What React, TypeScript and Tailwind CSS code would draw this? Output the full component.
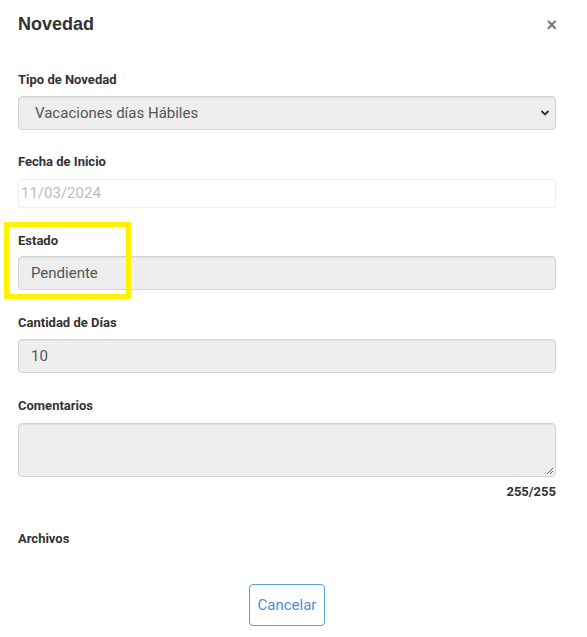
import React from 'react'

const label = 'block text-[13px] font-bold text-[#333] leading-5'
const filled = 'w-full h-[34px] rounded border border-[#d4d4d4] bg-[#eeeeee] px-3 text-[15px] text-[#555] flex items-center shadow-[inset_0_1px_1px_rgba(0,0,0,0.06)]'

export default function App() {
  return (
    <div className="relative w-[587px] h-[637px] bg-white overflow-hidden" style={{ fontFamily: 'Roboto, "Liberation Sans", sans-serif' }}>
      <div className="pl-[18px] pr-[31px]">
        <div className="flex items-start justify-between pt-[12px]">
          <h2 className="text-[18px] font-bold text-[#333] leading-6" style={{ fontFamily: '"Liberation Sans", Arial, sans-serif' }}>Novedad</h2>
          <span className="mt-[3px] mr-[-1px] text-[18px] font-bold leading-5 text-[#777]" style={{ fontFamily: '"Liberation Sans", Arial, sans-serif' }}>×</span>
        </div>

        <label className={`${label} mt-[34px]`}>Tipo de Novedad</label>
        <div className={`${filled} mt-[6px] relative pl-4`}>
          Vacaciones días Hábiles
          <svg className="absolute right-[5px] top-1/2 -translate-y-1/2" width="10" height="7" viewBox="0 0 10 7">
            <path d="M1.5 1.5 L5 5 L8.5 1.5" fill="none" stroke="#333" strokeWidth="1.8" />
          </svg>
        </div>

        <label className={`${label} mt-[22px]`}>Fecha de Inicio</label>
        <div className="mt-[7px] h-[29px] w-full rounded-[3px] border border-[#eeeeee] bg-white px-[2px] flex items-center text-[15px] text-[#bbbbbb]">
          11/03/2024
        </div>

        <label className={`${label} mt-[23px]`}>Estado</label>
        <div className={`${filled} mt-[5px]`}>Pendiente</div>

        <label className={`${label} mt-[23px]`}>Cantidad de Días</label>
        <div className={`${filled} mt-[6px]`}>10</div>

        <label className={`${label} mt-[23px]`}>Comentarios</label>
        <div className={`${filled} mt-[7px] h-[54px] relative`}>
          <svg className="absolute right-[1px] bottom-[1px]" width="9" height="9" viewBox="0 0 9 9">
            <path d="M8 2 L2 8 M8 5 L5 8" stroke="#666" strokeWidth="1" />
          </svg>
        </div>
        <div className="mt-[5px] text-right text-[13px] font-bold text-[#333] leading-5">255/255</div>

        <label className={`${label} mt-[27px]`}>Archivos</label>

        <div className="mt-[35px] flex justify-center">
          <button className="h-[42px] w-[76px] rounded border border-[#5aa3e0] bg-white text-[15px] text-[#4a8fd6]">
            Cancelar
          </button>
        </div>
      </div>

      <div className="absolute left-[4px] top-[222px] w-[127px] h-[77px] border-[5px] border-[#fff200]" />
    </div>
  )
}
